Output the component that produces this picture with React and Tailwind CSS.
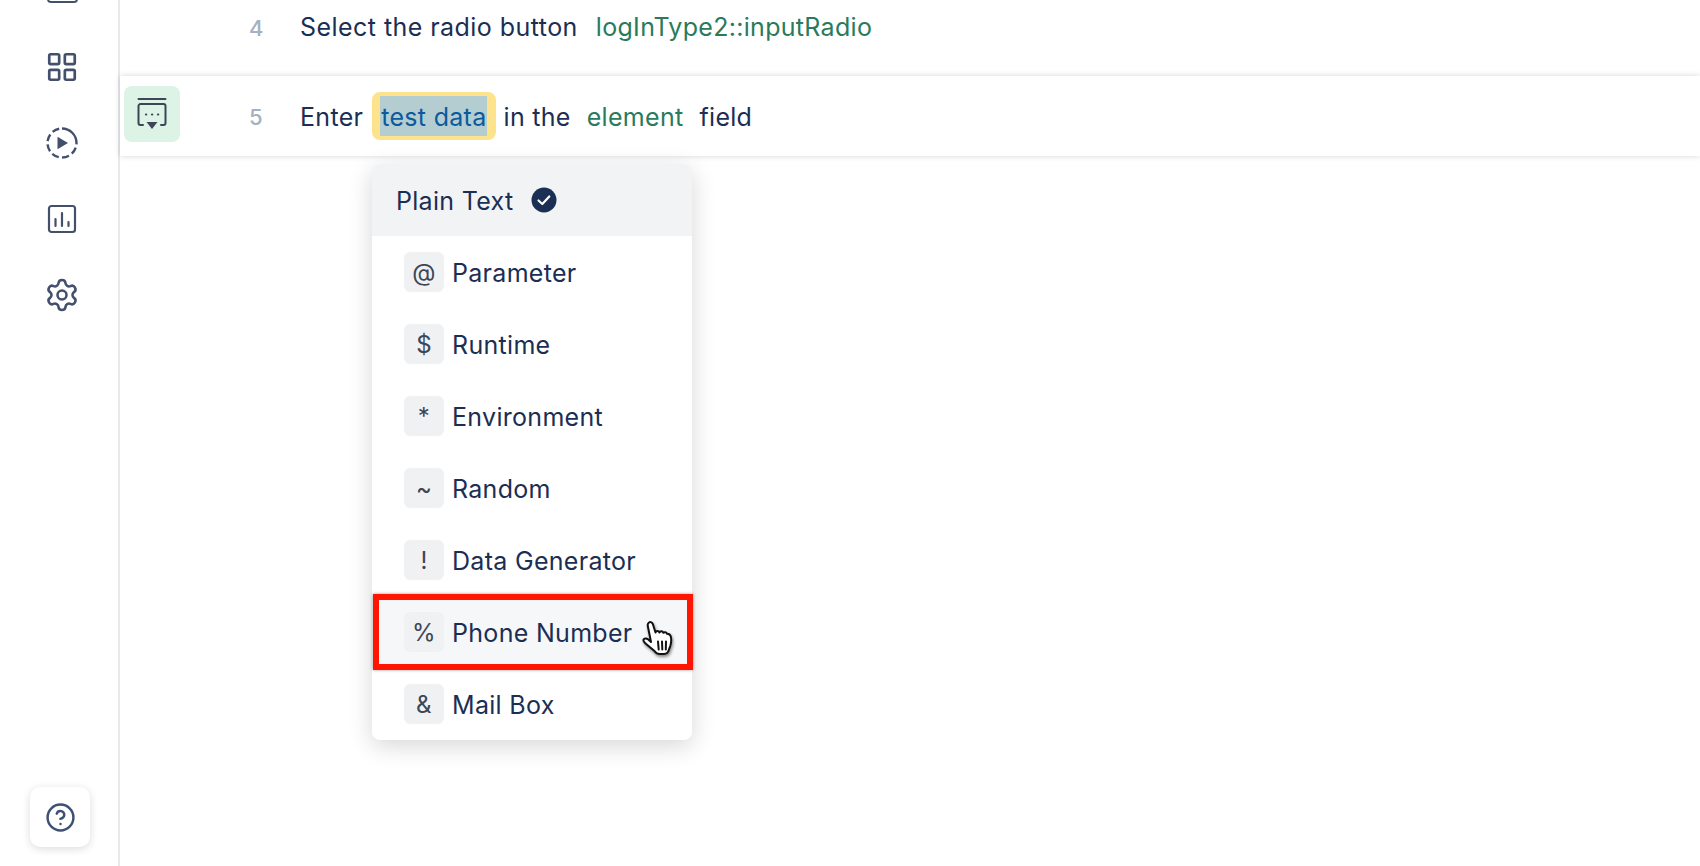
import React from 'react';
import { LayoutGrid, Settings, CircleHelp } from 'lucide-react';

const options = [
  { sign: '@', label: 'Parameter' },
  { sign: '$', label: 'Runtime' },
  { sign: '*', label: 'Environment' },
  { sign: '~', label: 'Random' },
  { sign: '!', label: 'Data Generator' },
  { sign: '%', label: 'Phone Number', marked: true },
  { sign: '&', label: 'Mail Box' },
];

function RunIcon() {
  return (
    <svg width="34" height="34" viewBox="0 0 34 34" fill="none" stroke="#43506c" strokeWidth="2.4">
      <circle cx="17" cy="17" r="14.5" strokeDasharray="24 3.4 7.2 3.4 7.2 3.4 7.2 3.4 7.2 3.4 7.2 3.4 7.2 3.4" transform="rotate(-90 17 17)" />
      <path d="M12.500 10.700v12.600l10.500-6.300z" fill="#43506c" stroke="none" />
    </svg>
  );
}

function ReportIcon() {
  return (
    <svg width="30" height="30" viewBox="0 0 30 30" fill="none" stroke="#43506c" strokeWidth="2.2" strokeLinecap="round">
      <rect x="2" y="2" width="26" height="26" rx="2.5" />
      <path d="M8.500 15v7M15 9v13M21.500 18v4" />
    </svg>
  );
}

function StepIcon() {
  return (
    <svg width="30" height="32" viewBox="0 0 30 32" fill="none" stroke="#3d4656" strokeWidth="2" strokeLinecap="round">
      <path d="M1.500 1h27" />
      <path d="M6 27H3.500a2 2 0 0 1-2-2V8a2 2 0 0 1 2-2h23a2 2 0 0 1 2 2v17a2 2 0 0 1-2 2H24" />
      <path d="M9.500 24h11L15 31z" fill="#3d4656" stroke="none" />
      <path d="M9 16.500h.2M15 16.500h.2M21 16.500h.2" strokeWidth="2.2" />
    </svg>
  );
}

function HandCursor() {
  return (
    <svg width="34" height="38" viewBox="0 0 34 38" className="absolute left-[270px] top-[24px] drop-shadow-[1px_2px_1.5px_rgba(0,0,0,0.45)]">
      <path
        d="M7 2.500c1.600-1 3.300 0 3.900 1.700l2.600 8.300c.3-1.700 3-2.200 4 0 .5-1.500 3-1.700 3.900.3.800-1 3-.8 3.700 1 1.600 0 3 .7 3.600 2.500.8 3 .6 6.500-.4 9.500l-2 5.500c-.4 1.200-1.200 2-2.500 2.300-3 .7-6 .6-8.500-.1-1.300-.4-2-1.300-2.800-2.400L3.500 23.500c-1-1.300-2.500-2.300-2-3.800.6-1.600 3-1.700 4.500-.5l3 2.800L5.800 6c-.3-1.500 0-2.700 1.200-3.500z"
        fill="#fff"
        stroke="#111"
        strokeWidth="2"
        strokeLinejoin="round"
      />
      <path d="M16 21.500l.7 8M20 21.500l.3 8M24 21.500l-.2 8" stroke="#111" strokeWidth="2" strokeLinecap="round" fill="none" />
    </svg>
  );
}

export default function App() {
  return (
    <div className="flex h-screen overflow-hidden bg-white font-['Inter',sans-serif] text-[25px] tracking-[0.3px] text-[#1b2e54]">
      {/* Sidebar */}
      <div className="flex w-[120px] shrink-0 flex-col items-center border-r-2 border-[#e8e9ec] pl-[7px] pr-[1px]">
        <div className="mt-[-27px] h-[30px] w-[31px] shrink-0 rounded-[4px] border-[2.5px] border-[#43506c]" />
        <LayoutGrid size={34} strokeWidth={1.9} color="#43506c" className="mt-[47px] shrink-0" />
        <div className="mt-[42px]"><RunIcon /></div>
        <div className="mt-[44px]"><ReportIcon /></div>
        <Settings size={36} strokeWidth={1.7} color="#43506c" className="mt-[43px] shrink-0" />
        <div className="mt-auto mb-[19px] mr-[4px] flex h-[60px] w-[60px] shrink-0 items-center justify-center rounded-[10px] bg-white shadow-[0_2px_8px_rgba(0,0,0,0.14)]">
          <CircleHelp size={31} strokeWidth={1.9} color="#3d5075" />
        </div>
      </div>

      {/* Steps */}
      <div className="flex min-w-0 flex-1 flex-col">
        <div className="flex h-[76px] shrink-0 items-start">
          <div className="flex h-[56px] items-center pl-[129px]">
            <span className="w-[51px] text-[22px] font-medium text-[#a5b0c2]">4</span>
            <span className="tracking-[0.45px]">Select the radio button</span>
            <span className="ml-[18px] text-[#2a7a5c]">logInType2::inputRadio</span>
          </div>
        </div>

        <div className="relative flex h-[80px] shrink-0 items-center bg-white shadow-[0_0_6px_rgba(0,0,0,0.16)]">
          <div className="mb-[4px] ml-[4px] flex h-[56px] w-[56px] items-center justify-center rounded-[8px] bg-[#dcf3e6]">
            <StepIcon />
          </div>
          <span className="ml-[69px] w-[51px] pt-[3px] text-[22px] font-medium text-[#a5b0c2]">5</span>
          <span className="pt-[3px]">Enter</span>
          <span className="ml-[9px] flex h-[48px] items-center rounded-[8px] border-y-[4px] border-l-[8px] border-r-[9px] border-[#fde38c] bg-[#b3cdd1] pl-[1px] pt-[4px] text-[#0b5a9e]">test data</span>
          <span className="ml-[8px] pt-[3px]">in the</span>
          <span className="ml-[16px] pt-[3px] text-[#2a7a5c]">element</span>
          <span className="ml-[16px] pt-[3px]">field</span>

          {/* Type menu */}
          <div className="absolute left-[252px] top-[88px] w-[320px] rounded-[8px] bg-white shadow-[0_6px_24px_rgba(0,0,0,0.16)]">
            <div className="flex h-[72px] items-center rounded-t-[8px] bg-[#f2f3f5] pl-[24px]">
              <span className="pt-[4px]">Plain Text</span>
              <svg width="26" height="26" viewBox="0 0 26 26" className="ml-[18px]">
                <circle cx="13" cy="13" r="12.500" fill="#1b2e54" />
                <path d="M7.500 13.500l3.800 3.500 7-7.500" fill="none" stroke="#fff" strokeWidth="2.200" strokeLinecap="round" strokeLinejoin="round" />
              </svg>
            </div>
            {options.map((option) => (
              <div key={option.label} className={`relative flex h-[72px] items-center pl-[32px] ${option.marked ? 'bg-[#f6f7f9]' : ''}`}>
                <span className="flex h-[40px] w-[40px] items-center justify-center rounded-[6px] bg-[#f0f1f3] pt-[2px] text-[24px] text-[#3d4656]">{option.sign}</span>
                <span className="ml-[8px] pt-[4px]">{option.label}</span>
                {option.marked && (
                  <>
                    <HandCursor />
                    <div className="absolute left-[1px] top-[-2px] h-[76px] w-[320px] border-[6px] border-[#ff1500] shadow-[0_0_3px_rgba(0,0,0,0.4)]" />
                  </>
                )}
              </div>
            ))}
          </div>
        </div>
      </div>
    </div>
  );
}
